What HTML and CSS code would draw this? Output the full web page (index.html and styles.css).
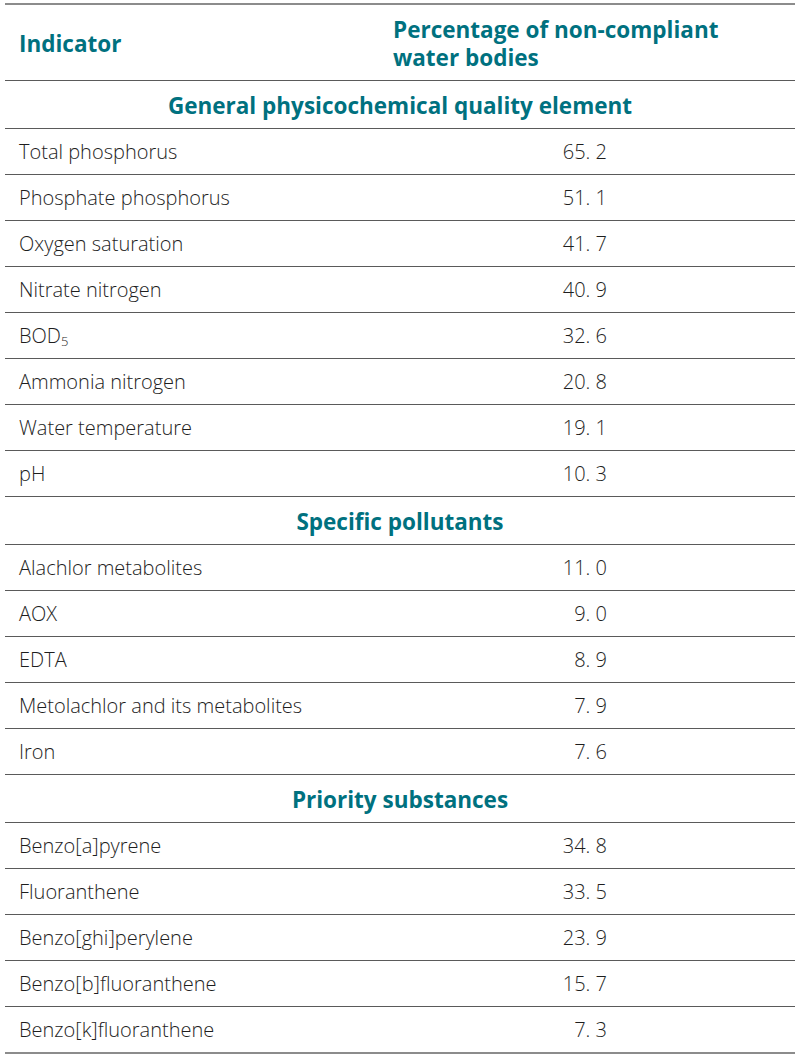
FILE: index.html
```html
<!DOCTYPE html>
<html>
<head>
<meta charset="utf-8">
<link rel="stylesheet" href="styles.css">
</head>
<body>
<table class="data">
  <thead>
    <tr class="head">
      <th class="c1">Indicator</th>
      <th class="c2">Percentage of non-compliant water bodies</th>
    </tr>
  </thead>
  <tbody>
    <tr class="sec"><td colspan="2">General physicochemical quality element</td></tr>
    <tr><td class="c1">Total phosphorus</td><td class="num">65. 2</td></tr>
    <tr><td class="c1">Phosphate phosphorus</td><td class="num">51. 1</td></tr>
    <tr><td class="c1">Oxygen saturation</td><td class="num">41. 7</td></tr>
    <tr><td class="c1">Nitrate nitrogen</td><td class="num">40. 9</td></tr>
    <tr><td class="c1">BOD<sub>5</sub></td><td class="num">32. 6</td></tr>
    <tr><td class="c1">Ammonia nitrogen</td><td class="num">20. 8</td></tr>
    <tr><td class="c1">Water temperature</td><td class="num">19. 1</td></tr>
    <tr><td class="c1">pH</td><td class="num">10. 3</td></tr>
    <tr class="sec"><td colspan="2">Specific pollutants</td></tr>
    <tr><td class="c1">Alachlor metabolites</td><td class="num">11. 0</td></tr>
    <tr><td class="c1">AOX</td><td class="num">9. 0</td></tr>
    <tr><td class="c1">EDTA</td><td class="num">8. 9</td></tr>
    <tr><td class="c1">Metolachlor and its metabolites</td><td class="num">7. 9</td></tr>
    <tr><td class="c1">Iron</td><td class="num">7. 6</td></tr>
    <tr class="sec"><td colspan="2">Priority substances</td></tr>
    <tr><td class="c1">Benzo[a]pyrene</td><td class="num">34. 8</td></tr>
    <tr><td class="c1">Fluoranthene</td><td class="num">33. 5</td></tr>
    <tr><td class="c1">Benzo[ghi]perylene</td><td class="num">23. 9</td></tr>
    <tr><td class="c1">Benzo[b]fluoranthene</td><td class="num">15. 7</td></tr>
    <tr><td class="c1">Benzo[k]fluoranthene</td><td class="num">7. 3</td></tr>
  </tbody>
</table>
</body>
</html>
```
FILE: styles.css
```css
html, body {
  margin: 0;
  padding: 0;
  background: #ffffff;
}
body {
  padding: 3px 5px 0 5px;
  font-family: "Open Sans", "Noto Sans", sans-serif;
  color: #1e1e1e;
}
.data {
  width: 790px;
  border-collapse: collapse;
  border-top: 2px solid #8c8c8c;
  border-bottom: 2px solid #8c8c8c;
}
.data td, .data th {
  padding: 0;
  border-bottom: 1px solid #5a5a5a;
}
.head th {
  height: 73px;
  text-align: left;
  vertical-align: middle;
  color: #00717f;
  font-weight: 700;
  font-size: 22.5px;
  line-height: 28px;
}
.head .c1 {
  width: 374px;
  padding-left: 14px;
  padding-top: 2px;
}
.head .c2 {
  padding-right: 60px;
  padding-top: 2px;
}
.sec td {
  height: 46px;
  text-align: center;
  color: #00717f;
  font-weight: 700;
  font-size: 22.5px;
  padding-top: 1px;
}
td.c1 {
  height: 45px;
  padding-left: 14px;
  font-size: 20px;
  font-weight: 300;
}
td.num {
  text-align: right;
  padding-right: 188px;
  font-size: 20px;
  font-weight: 300;
}
sub {
  font-size: 13px;
  vertical-align: -3px;
}
```
